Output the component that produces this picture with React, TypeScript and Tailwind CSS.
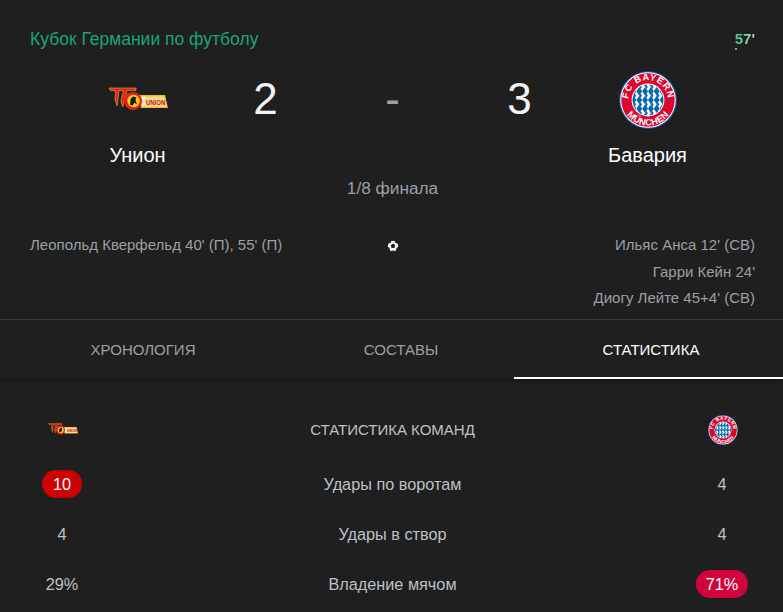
const UnionLogo = ({ className }: { className: string }) => (
  <svg viewBox="0 0 60 24" className={className}>
    {/* word band on the right */}
    <path d="M31 8 H57 L60 21 H33 Z" fill="#f0b93a" />
    <path d="M33 9.5 H56.5 L58.5 19.8 H34.5 Z" fill="#f7d98a" />
    <path d="M33 10.5 L37 9.5 L37 12 L33.5 13 Z M34 16 L37 15.4 L37 18 L33.5 18.6 Z" fill="#fff" />
    <text transform="translate(47.6 18.2) scale(1 1.35)" textAnchor="middle" fontFamily="'Liberation Sans', sans-serif" fontSize="6" fontWeight="700" fill="#c8161d">UNION</text>
    {/* T and F */}
    <path d="M1 1 H28 V3.6 H19 L17.8 7 H22 L21.4 9 H17.2 L14.8 20 L12.8 14 L15.4 3.6 H11 L9 19 L7 12 L7.6 3.6 H2.5 Z" fill="#e2231a" stroke="#e9b53a" strokeWidth="0.6" />
    {/* badge */}
    <circle cx="25" cy="14" r="9" fill="#e2231a" />
    <circle cx="25.5" cy="14" r="6.2" fill="#f6c915" />
    <path d="M22 18 L22.6 12 L25 9.6 L28.4 10.6 L27.4 13 L29 17.6 L26.4 15.8 L24.6 18.4 Z" fill="#1a1a1a" />
  </svg>
)

const BayernLogo = ({ className }: { className: string }) => {
  const cols = [0, 1, 2, 3, 4, 5, 6]
  const rows = [0, 1, 2, 3, 4]
  return (
    <svg viewBox="0 0 60 60" className={className}>
      <defs>
        <clipPath id="inner">
          <circle cx="30" cy="30" r="16" />
        </clipPath>
        <path id="topArc" d="M9.5 30 A20.5 20.5 0 0 1 50.5 30" />
        <path id="bottomArc" d="M3.6 30 A26.4 26.4 0 0 0 56.4 30" />
      </defs>
      <circle cx="30" cy="30" r="29.8" fill="#1c63b7" />
      <circle cx="30" cy="30" r="28.7" fill="#fff" />
      <circle cx="30" cy="30" r="27.6" fill="#dc052d" />
      <circle cx="30" cy="30" r="17" fill="#fff" />
      <g clipPath="url(#inner)">
        <rect x="12" y="12" width="36" height="36" fill="#fff" />
        {cols.map((c) =>
          rows.map((r) => (
            <path
              key={`${c}-${r}`}
              d={`M${12 + c * 6} ${12 + r * 9} l3 -4.5 l3 4.5 l-3 4.5 Z`}
              fill="#0066b2"
            />
          )),
        )}
        {cols.map((c) =>
          rows.map((r) => (
            <path
              key={`b-${c}-${r}`}
              d={`M${15 + c * 6} ${16.5 + r * 9} l1.4 -2.2 l1.4 2.2 l-1.4 2.2 Z`}
              fill="#0066b2"
            />
          )),
        )}
      </g>
      <text fontFamily="'Liberation Sans', sans-serif" fontSize="9.5" fontWeight="700" fill="#fff" letterSpacing="0.8">
        <textPath href="#topArc" startOffset="50%" textAnchor="middle">FC BAYERN</textPath>
      </text>
      <text fontFamily="'Liberation Sans', sans-serif" fontSize="9.5" fontWeight="700" fill="#fff" letterSpacing="0.3">
        <textPath href="#bottomArc" startOffset="50%" textAnchor="middle">MÜNCHEN</textPath>
      </text>
    </svg>
  )
}

const BallIcon = () => (
  <svg viewBox="0 0 12 12" className="w-3 h-3">
    <circle cx="6" cy="6" r="5.2" fill="#fff" />
    <path d="M6 3.6 L8.3 5.3 L7.4 8 H4.6 L3.7 5.3 Z" fill="#1f1f1f" />
    <path d="M3.4 0.9 L4.4 2.2 L2.4 3.6 L0.9 3.4 Z M8.6 0.9 L7.6 2.2 L9.6 3.6 L11.1 3.4 Z M0.4 7.2 L2 7.2 L3 9.2 L2.4 10.4 Z M11.6 7.2 L10 7.2 L9 9.2 L9.6 10.4 Z M4.8 11.4 L5.6 10.2 H6.4 L7.2 11.4 Z" fill="#1f1f1f" />
  </svg>
)

const stats = [
  { label: 'Удары по воротам', home: '10', away: '4', homeWin: true, awayWin: false },
  { label: 'Удары в створ', home: '4', away: '4', homeWin: false, awayWin: false },
  { label: 'Владение мячом', home: '29%', away: '71%', homeWin: false, awayWin: true },
]

const awayScorers = ["Ильяс Анса 12' (СВ)", "Гарри Кейн 24'", "Диогу Лейте 45+4' (СВ)"]

const App = () => {
  return (
    <div className="w-[783px] h-[612px] overflow-hidden bg-[#1f1f1f] font-['Liberation_Sans',Arial,sans-serif]">
      {/* Header */}
      <div className="flex items-center justify-between pl-[30px] pr-[28px] pt-[28px] h-[50px]">
        <span className="text-[17.5px] leading-[22px] text-[#17a673]">Кубок Германии по футболу</span>
        <span className="relative text-[15px] leading-[20px] font-bold bg-gradient-to-r from-[#45c0a0] to-[#a8e8a0] bg-clip-text text-transparent">
          57'
          <span className="absolute left-0 bottom-[-1px] w-[2px] h-[2px] bg-[#3fd08a]" />
        </span>
      </div>

      {/* Score */}
      <div className="grid grid-cols-5 pl-[75px] pr-[73px] mt-[4px]">
        <div className="flex flex-col items-center">
          <div className="h-[90px] flex items-center pr-[2px]">
            <UnionLogo className="w-[60px] h-[24px]" />
          </div>
          <span className="text-[20px] leading-[24px] text-white mt-[-1px] pr-[2px]">Унион</span>
        </div>
        <div className="h-[90px] flex items-center justify-center text-[44px] text-[#f1f3f4]">2</div>
        <div className="h-[90px] flex items-center justify-center text-[44px] text-[#9aa0a6]">-</div>
        <div className="h-[90px] flex items-center justify-center text-[44px] text-[#f1f3f4]">3</div>
        <div className="flex flex-col items-center">
          <div className="h-[90px] flex items-center pl-[2px] pt-[2px]">
            <BayernLogo className="w-[58px] h-[58px]" />
          </div>
          <span className="text-[20px] leading-[24px] text-white mt-[-1px] pl-[2px]">Бавария</span>
        </div>
      </div>
      <div className="text-center text-[17.25px] leading-[22px] mt-[10px] pl-[2px] text-[#9aa0a6]">1/8 финала</div>

      {/* Goals */}
      <div className="grid grid-cols-[1fr_40px_1fr] px-[28px] mt-[33px] h-[87px] text-[15px] leading-[26.5px] text-[#9aa0a6]">
        <div className="pl-[2px]">Леопольд Кверфельд 40' (П), 55' (П)</div>
        <div className="flex justify-center pt-[8px] pl-[2px]">
          <BallIcon />
        </div>
        <div className="flex flex-col items-end">
          {awayScorers.map((s) => (
            <span key={s}>{s}</span>
          ))}
        </div>
      </div>

      {/* Tabs */}
      <div className="grid grid-cols-[286px_228px_269px] h-[60px] border-t border-[#3c3c3c] shadow-[0_2px_4px_rgba(0,0,0,0.25)] text-[15px]">
        <div className="flex items-center justify-center pt-[1px] text-[#9aa0a6]">ХРОНОЛОГИЯ</div>
        <div className="flex items-center justify-center pt-[1px] pl-[2px] text-[#9aa0a6]">СОСТАВЫ</div>
        <div className="flex items-center justify-center pt-[3px] pl-[5px] text-white border-b-2 border-white">СТАТИСТИКА</div>
      </div>

      {/* Stats */}
      <div className="pt-[30px]">
        <div className="grid grid-cols-[124px_1fr_122px] h-[40px] mb-[10px] items-center text-[15px] text-[#bdc1c6]">
          <div className="flex justify-center pl-[2px]">
            <UnionLogo className="w-[30px] h-[12px]" />
          </div>
          <div className="text-center pt-[2px]">СТАТИСТИКА КОМАНД</div>
          <div className="flex justify-center pl-[2px] pt-[2px]">
            <BayernLogo className="w-[30px] h-[30px]" />
          </div>
        </div>
        {stats.map((row) => (
          <div key={row.label} className="grid grid-cols-[124px_1fr_122px] h-[50px] items-center text-[16.25px] text-[#bdc1c6]">
            <div className="flex justify-center">
              {row.homeWin ? (
                <span className="h-[28px] px-[11px] rounded-full bg-[#cc0000] text-white flex items-center">{row.home}</span>
              ) : (
                row.home
              )}
            </div>
            <div className="text-center">{row.label}</div>
            <div className="flex justify-center">
              {row.awayWin ? (
                <span className="h-[28px] px-[10px] rounded-full bg-[#d0033d] text-white flex items-center">{row.away}</span>
              ) : (
                row.away
              )}
            </div>
          </div>
        ))}
      </div>
    </div>
  )
}

export default App
